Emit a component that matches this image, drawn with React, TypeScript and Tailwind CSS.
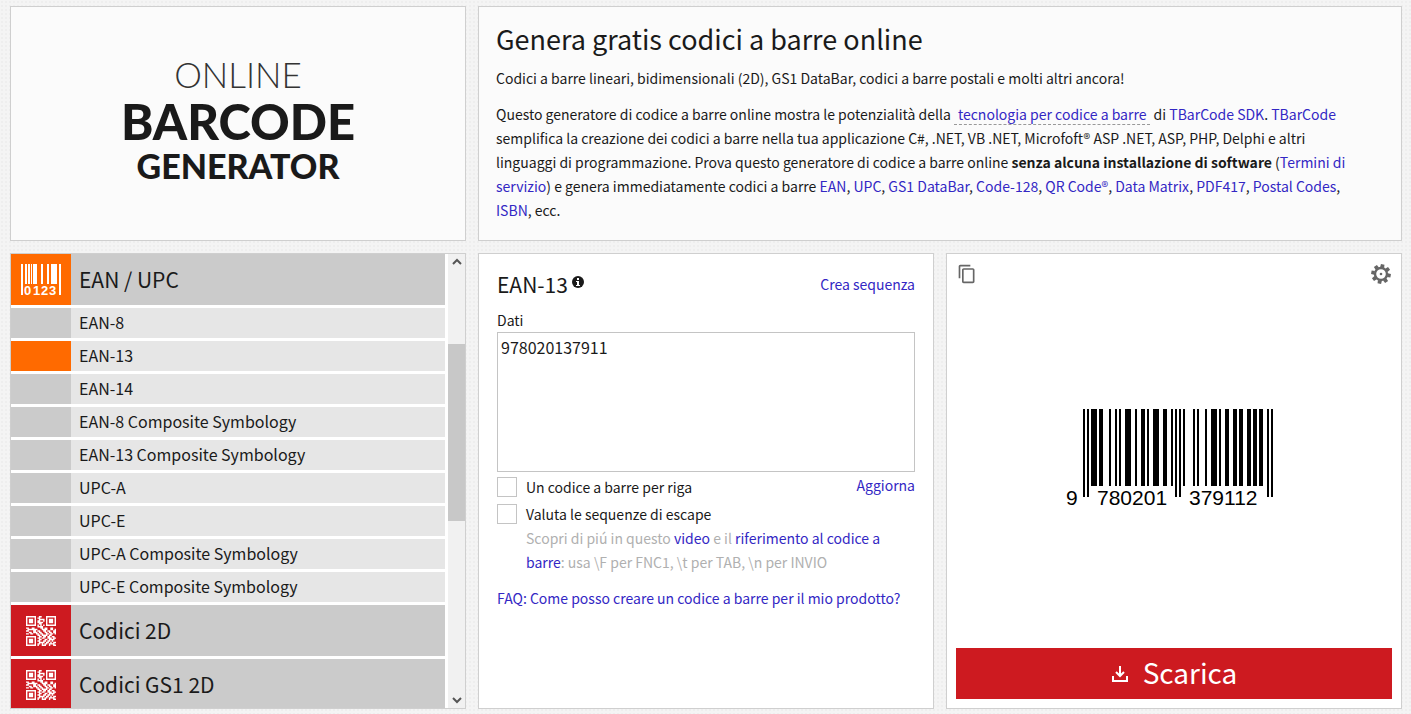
import React from 'react';
import { MdContentCopy } from 'react-icons/md';

const symbologies = [
  "EAN-8",
  "EAN-13",
  "EAN-14",
  "EAN-8 Composite Symbology",
  "EAN-13 Composite Symbology",
  "UPC-A",
  "UPC-E",
  "UPC-A Composite Symbology",
  "UPC-E Composite Symbology"
];

const qrRows = [
  "111111100110001111111",
  "100000101100001000001",
  "101110100111101011101",
  "101110101100101011101",
  "101110101111001011101",
  "100000100110001000001",
  "111111101010101111111",
  "000000001111000000000",
  "110011000011011001100",
  "011111110001111001101",
  "110001101100110110011",
  "001101110110011011011",
  "110110011011001101101",
  "000000001101111011000",
  "111111100110110110110",
  "100000101101100111011",
  "101110100110011011110",
  "101110101100110110100",
  "101110100111101101011",
  "100000101101011011110",
  "111111101001110010011"
];

const qrPath = qrRows
  .map((row, y) => row.split("").map((bit, x) => (bit === "1" ? `M${x} ${y}h1v1h-1z` : "")).join(""))
  .join("");

const leftCodes = ["0001101", "0011001", "0010011", "0111101", "0100011", "0110001", "0101111", "0111011", "0110111", "0001011"];
const parities = ["LLLLLL", "LLGLGG", "LLGGLG", "LLGGGL", "LGLLGG", "LGGLLG", "LGGGLL", "LGLGLG", "LGLGGL", "LGGLGL"];

const invert = (code: string) => code.replace(/[01]/g, (bit) => (bit === "0" ? "1" : "0"));
const reverse = (code: string) => code.split("").reverse().join("");

const encodeEan13 = (value: string) => {
  const digits = value.split("").map(Number);
  const parity = parities[digits[0]];
  const left = digits.slice(1, 7).map((d, i) => (parity[i] === "L" ? leftCodes[d] : reverse(invert(leftCodes[d])))).join("");
  const right = digits.slice(7).map((d) => invert(leftCodes[d])).join("");
  return `101${left}01010${right}101`;
};

const Ean13 = ({ value }: { value: string }) => {
  const bits = encodeEan13(value).split("");
  const isGuard = (i: number) => i < 3 || i > 91 || (i > 44 && i < 50);

  return (
    <svg width="216" height="100" viewBox="0 0 216 100" shapeRendering="crispEdges" role="img" aria-label={value}>
      {bits.map((bit, i) =>
        bit === "1" ? <rect key={i} x={17 + i * 2} y="0" width="2" height={isGuard(i) ? 88 : 77} /> : null
      )}
      <g fontFamily="'Liberation Sans', Arial, sans-serif" fontSize="21">
        <text x="0" y="96">{value[0]}</text>
        <text x="31" y="96">{value.slice(1, 7)}</text>
        <text x="123" y="96">{value.slice(7)}</text>
      </g>
    </svg>
  );
};

const BarcodeIcon = () => (
  <svg width="42" height="34" viewBox="0 0 42 34" fill="white" shapeRendering="crispEdges" aria-hidden="true">
    <path d="M1 1h2v31h-2zM5 1h2v20h-2zM8 1h2v20h-2zM11 1h1v20h-1zM13 1h4v20h-4zM21 1h2v20h-2zM27 1h2v20h-2zM31 1h6v20h-6zM39 1h2v31h-2z" />
    <g fontFamily="'Liberation Sans', Arial, sans-serif" fontWeight="700" fontSize="13">
      <text x="4" y="32">0</text>
      <text x="13" y="32">1</text>
      <text x="21" y="32">2</text>
      <text x="29" y="32">3</text>
    </g>
  </svg>
);

const QrIcon = () => (
  <svg width="30" height="30" viewBox="0 0 21 21" fill="white" aria-hidden="true">
    <path d={qrPath} />
  </svg>
);

const GearIcon = () => (
  <svg width="20" height="20" viewBox="-10 -10 20 20" fill="#666" aria-hidden="true">
    {[10, 55, 100, 145, 190, 235, 280, 325].map((angle) => (
      <path key={angle} d="M-2 -6.5L-1.8 -9.8H1.8L2 -6.5Z" transform={`rotate(${angle})`} />
    ))}
    <circle r="6" fill="none" stroke="#666" strokeWidth="2.4" />
    <circle r="1.3" />
  </svg>
);

const InfoIcon = () => (
  <svg className="mt-1 self-start" width="12" height="12" viewBox="0 0 12 12" aria-hidden="true">
    <circle cx="6" cy="6" r="6" fill="#1a1a1a" />
    <path d="M5 2h2v2H5zM4 5h3v4h1v1H4V9h1V6H4z" fill="white" />
  </svg>
);

const DownloadIcon = () => (
  <svg width="18" height="18" viewBox="0 0 18 18" fill="none" stroke="white" strokeWidth="2" aria-hidden="true">
    <path d="M9 1v10M5 7l4 4 4-4M2 11v5h14v-5" />
  </svg>
);

const Chevron = ({ d }: { d: string }) => (
  <svg width="10" height="8" viewBox="0 0 10 8" fill="none" stroke="#555" strokeWidth="2" aria-hidden="true">
    <path d={d} />
  </svg>
);

const Link = ({ children }: { children: React.ReactNode }) => (
  <a href="#" className="text-[#3327c4]">{children}</a>
);

const GroupHeader = ({ icon, label, color }: { icon: React.ReactNode; label: string; color: string }) => (
  <button className="flex h-[51px] w-full shrink-0 items-center bg-[#cbcbcb] text-left">
    <span className={`flex h-full w-[60px] items-center justify-center ${color}`}>{icon}</span>
    <span className="pb-0.5 pl-2 text-[21px]">{label}</span>
  </button>
);

const App = () => {
  return (
    <div className="min-h-screen bg-[#f4f4f4] bg-[radial-gradient(#eeeeee_1px,transparent_1px)] bg-[size:4px_4px] pt-1.5 pr-[9px] pb-[5px] pl-2.5 font-['Noto_Sans_CJK_JP','Noto_Sans',sans-serif] text-sm leading-6 text-[#1a1a1a]">
      <div className="grid grid-cols-3 gap-3">
        {/* Logo */}
        <div className="flex flex-col items-center justify-center border border-[#cfcfcf] bg-[#fbfbfb] pb-2.5 font-[Lato,sans-serif]">
          <span className="text-[35px] leading-[44px] font-light text-[#333]">ONLINE</span>
          <span className="text-[49px] leading-[50px] font-black">BARCODE</span>
          <span className="text-[34px] leading-[40px] font-black">GENERATOR</span>
        </div>

        {/* Intro */}
        <div className="col-span-2 border border-[#cfcfcf] bg-[#fbfbfb] pt-[13px] pr-[46px] pb-[18px] pl-[17px]">
          <h1 className="text-[27px] leading-[38px]">Genera gratis codici a barre online</h1>
          <p className="mt-2">Codici a barre lineari, bidimensionali (2D), GS1 DataBar, codici a barre postali e molti altri ancora!</p>
          <p className="mt-3">
            Questo generatore di codice a barre online mostra le potenzialità della{" "}
            <a href="#" className="border-b border-dashed border-[#999] px-1 text-[#3327c4]">tecnologia per codice a barre</a>{" "}
            di <Link>TBarCode SDK</Link>. <Link>TBarCode</Link> semplifica la creazione dei codici a barre nella tua applicazione C#, .NET, VB .NET, Microfoft® ASP .NET, ASP, PHP, Delphi e altri linguaggi di programmazione. Prova questo generatore di codice a barre online <b>senza alcuna installazione di software</b> (<Link>Termini di servizio</Link>) e genera immediatamente codici a barre <Link>EAN</Link>, <Link>UPC</Link>, <Link>GS1 DataBar</Link>, <Link>Code-128</Link>, <Link>QR Code®</Link>, <Link>Data Matrix</Link>, <Link>PDF417</Link>, <Link>Postal Codes</Link>, <Link>ISBN</Link>, ecc.
          </p>
        </div>

        {/* Symbology list */}
        <div className="flex h-[456px] border border-[#cfcfcf] bg-white">
          <div className="flex flex-1 flex-col gap-[3px] overflow-hidden">
            <GroupHeader icon={<BarcodeIcon />} label="EAN / UPC" color="bg-[#ff6a00]" />
            {symbologies.map((name) => (
              <button key={name} className="flex h-[30px] w-full shrink-0 items-center bg-[#e6e6e6] text-left text-base">
                <span className={`h-full w-[60px] ${name === "EAN-13" ? "bg-[#ff6a00]" : "bg-[#cbcbcb]"}`}></span>
                <span className="pb-0.5 pl-2">{name}</span>
              </button>
            ))}
            <GroupHeader icon={<QrIcon />} label="Codici 2D" color="bg-[#cd1a20]" />
            <GroupHeader icon={<QrIcon />} label="Codici GS1 2D" color="bg-[#cd1a20]" />
          </div>
          <div className="ml-[3px] flex w-[17px] flex-col items-center bg-[#f1f1f1] py-1">
            <Chevron d="M1 6l4-4 4 4" />
            <div className="mt-[78px] mb-auto h-[177px] w-full bg-[#c8c8c8]"></div>
            <Chevron d="M1 2l4 4 4-4" />
          </div>
        </div>

        {/* Data form */}
        <div className="border border-[#cfcfcf] bg-white px-[18px] pt-[18px]">
          <div className="flex items-center justify-between">
            <h2 className="flex items-center gap-1 text-[21px]">
              EAN-13 <InfoIcon />
            </h2>
            <Link>Crea sequenza</Link>
          </div>
          <label htmlFor="data" className="mt-3 block">Dati</label>
          <textarea id="data" defaultValue="978020137911" className="block h-[140px] w-full resize-none border border-[#c4c4c4] bg-white px-[3px] py-0.5 text-base outline-none" />
          <div className="mt-[3px] flex items-start justify-between">
            <label className="flex items-center gap-[9px]">
              <input type="checkbox" className="size-5 appearance-none border border-[#c4c4c4] bg-white" />
              Un codice a barre per riga
            </label>
            <button className="-mt-0.5 text-[#3327c4]">Aggiorna</button>
          </div>
          <label className="mt-[3px] flex items-center gap-[9px]">
            <input type="checkbox" className="size-5 appearance-none border border-[#c4c4c4] bg-white" />
            Valuta le sequenze di escape
          </label>
          <p className="pl-[29px] text-[#b0b0b0]">
            Scopri di piú in questo <Link>video</Link> e il <Link>riferimento al codice a barre</Link>: usa \F per FNC1, \t per TAB, \n per INVIO
          </p>
          <p className="mt-3">
            <Link>FAQ: Come posso creare un codice a barre per il mio prodotto?</Link>
          </p>
        </div>

        {/* Preview */}
        <div className="flex flex-col border border-[#cfcfcf] bg-white px-[9px] pt-2.5 pb-[9px]">
          <div className="flex items-center justify-between px-px">
            <button aria-label="Copia">
              <MdContentCopy className="size-5 text-[#666]" />
            </button>
            <button aria-label="Impostazioni">
              <GearIcon />
            </button>
          </div>
          <div className="flex flex-1 items-center justify-center pb-3.5">
            <Ean13 value="9780201379112" />
          </div>
          <button className="flex h-[51px] items-center justify-center gap-3.5 bg-[#cd1a20] text-[28px] text-white">
            <DownloadIcon />
            <span className="pb-1">Scarica</span>
          </button>
        </div>
      </div>
    </div>
  );
};

export default App;
